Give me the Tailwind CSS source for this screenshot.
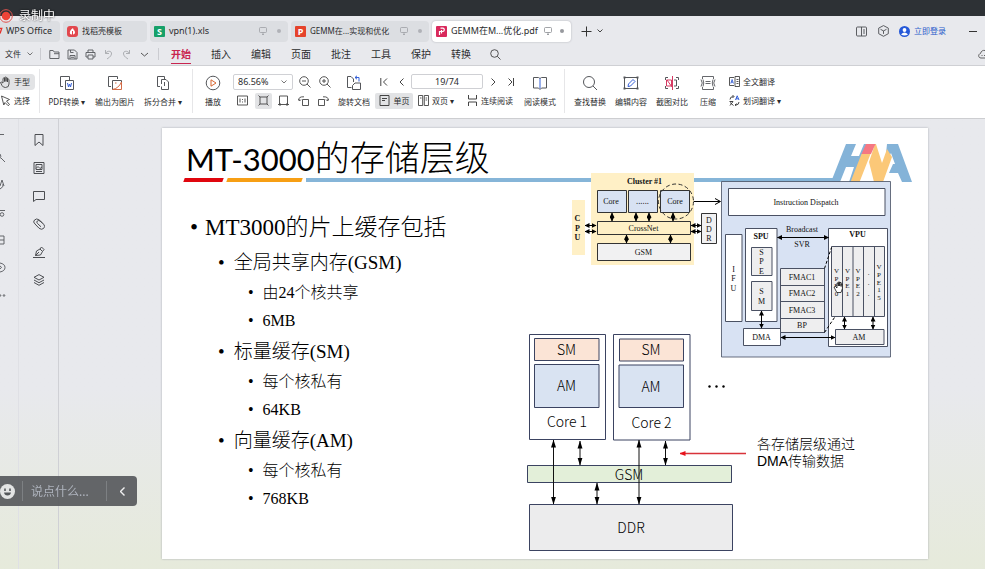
<!DOCTYPE html>
<html lang="zh-CN">
<head>
<meta charset="utf-8">
<title>GEMM在M...优化.pdf - WPS Office</title>
<script src="https://cdn.jsdelivr.net/npm/@tailwindcss/browser@4"></script>
</head>
<body class="flex flex-col h-screen overflow-hidden font-['Noto_Sans','Noto_Sans_CJK_SC',sans-serif] text-[8px] leading-3 text-[#2b2c2e] bg-[#e8e9ed]">

<!-- Recording bar -->
<div class="h-4 shrink-0 bg-[#2d3135]"></div>
<div class="fixed z-10 left-0 top-2 flex items-center gap-[6px] text-white text-[12px] leading-4 [text-shadow:0_0_2px_#000]">
  <svg class="w-[13px] h-4" viewBox="0 0 13 16"><circle cx="6" cy="8" r="6.3" fill="none" stroke="#e2534d"/><circle cx="6" cy="8" r="4.3" fill="#ee4438"/></svg>
  <span>录制中</span>
</div>

<!-- Document tabs -->
<div class="flex items-center h-[27px] shrink-0 pt-[3px]">
  <button class="flex items-center h-[21px] w-[60px] bg-[#dcdee2] rounded-r text-[9px] whitespace-nowrap"><svg class="w-[6px] h-2 shrink-0" viewBox="0 0 7 8"><path d="M0 1h2L0 7" fill="none" stroke="#e5302a" stroke-width="1.6"/></svg>WPS Office</button>
  <button class="flex items-center h-[21px] w-[84px] ml-[3px] pl-1 gap-1 bg-[#dcdee2] rounded"><svg class="w-[11px] h-[11px]" viewBox="0 0 11 11"><rect width="11" height="11" rx="3" fill="#e2474d"/><path d="M6 2c-3 2-3.500 4-3 5.500S8 9 8 6.500 6 4 6 2z" fill="#fff"/><path d="M5.500 5v4" stroke="#e2474d"/></svg>找稻壳模板</button>
  <button class="flex items-center h-[21px] w-[138px] ml-[3px] px-1 gap-1 bg-[#dcdee2] rounded text-[9px]"><svg class="w-[11px] h-[11px]" viewBox="0 0 11 11"><rect width="11" height="11" rx="1" fill="#16a069"/><text x="5.500" y="9" font-size="9" font-weight="700" text-anchor="middle" fill="#fff">S</text></svg><span class="flex-1 text-left">vpn(1).xls</span><svg class="w-2 h-2 mr-[6px]" viewBox="0 0 8 8" fill="none" stroke="#9da0a5" stroke-width=".8"><rect x=".5" y=".5" width="7" height="5" rx="1"/><path d="M3 7.500h2M4 5.500v2"/></svg><span class="w-1 h-1 rounded-full bg-[#b0b2b7] mr-[3px]"></span></button>
  <button class="flex items-center h-[21px] w-[138px] ml-[3px] px-1 gap-1 bg-[#dcdee2] rounded"><svg class="w-[11px] h-[11px]" viewBox="0 0 11 11"><rect width="11" height="11" rx="1" fill="#e5432b"/><text x="5.500" y="9" font-size="9" font-weight="700" text-anchor="middle" fill="#fff">P</text></svg><span class="flex-1 text-left whitespace-nowrap">GEMM在...实现和优化</span><svg class="w-2 h-2 mr-[6px]" viewBox="0 0 8 8" fill="none" stroke="#9da0a5" stroke-width=".8"><rect x=".5" y=".5" width="7" height="5" rx="1"/><path d="M3 7.500h2M4 5.500v2"/></svg><span class="w-1 h-1 rounded-full bg-[#b0b2b7] mr-[3px]"></span></button>
  <button class="flex items-center h-[21px] w-[139px] ml-[3px] px-1 gap-1 bg-white rounded shadow-[0_0_2px_#a9abb2]"><svg class="w-[11px] h-[11px] shrink-0" viewBox="0 0 11 11"><rect width="11" height="11" rx="1" fill="#d9295c"/><path d="M3.500 9V5.500H7A1.700 1.700 0 0 0 7 2.200H4.500M5.500 7.500V4" fill="none" stroke="#fff" stroke-width="1.200"/></svg><span class="flex-1 text-left whitespace-nowrap text-[9px]">GEMM在M...优化.pdf</span><svg class="w-2 h-2 mr-1 shrink-0" viewBox="0 0 8 8" fill="none" stroke="#8a8d92" stroke-width=".8"><rect x=".5" y=".5" width="7" height="5" rx="1"/><path d="M3 7.500h2M4 5.500v2"/></svg><span class="w-1 h-1 rounded-full bg-[#97999e] mr-[3px]"></span></button>
  <button aria-label="新建" class="ml-[10px]"><svg class="w-[11px] h-[11px]" viewBox="0 0 11 11"><path d="M5.500 .5v10M.5 5.500h10" stroke="#333"/></svg></button>
  <button aria-label="标签列表" class="ml-[5px]"><svg class="w-[6px] h-1" viewBox="0 0 6 4"><path d="M.5.500L3 3 5.500.500" fill="none" stroke="#444"/></svg></button>
  <span class="flex-1"></span>
  <button aria-label="分栏"><svg class="w-[11px] h-[11px]" viewBox="0 0 11 11" fill="none" stroke="#4c4e52" stroke-width=".9"><rect x=".5" y="1" width="10" height="9" rx="1"/><path d="M5.500 1v9M8 3v5"/></svg></button>
  <button aria-label="应用" class="ml-[11px]"><svg class="w-[11px] h-3" viewBox="0 0 11 12" fill="none" stroke="#4c4e52" stroke-width=".9"><path d="M5.500.600l4.800 2.500v5.600L5.500 11.300.700 8.700V3.100zM2.500 4.300l3 1.600 3-1.600M5.500 5.900v3"/></svg></button>
  <button class="flex items-center gap-1 ml-[10px] text-[#2a5bcb] whitespace-nowrap"><svg class="w-[11px] h-[11px]" viewBox="0 0 11 11"><circle cx="5.500" cy="5.500" r="5.500" fill="#2659d8"/><circle cx="5.500" cy="4" r="1.900" fill="#fff"/><path d="M2 8.500q3.500-4 7 0-3.500 2-7 0z" fill="#fff"/></svg>立即登录</button>
  <button aria-label="最小化" class="ml-[23px] mr-2 w-2 h-px bg-[#333]"></button>
</div>

<!-- Menu row -->
<nav class="flex items-center h-[23px] shrink-0 border-b border-[#cfd0d4] text-[10px] [&>svg]:shrink-0">
  <button class="flex items-center ml-[5px] gap-[6px] text-[8px] whitespace-nowrap">文件<svg class="w-[6px] h-1" viewBox="0 0 6 4"><path d="M.5.500L3 3 5.500.500" fill="none" stroke="#555" stroke-width=".8"/></svg></button>
  <span class="w-px h-3 bg-[#cbccd1] ml-[7px] mr-2"></span>
  <div class="flex gap-[7px] [&_svg]:w-[11px] [&_svg]:h-[11px]">
    <button aria-label="打开"><svg viewBox="0 0 11 11" fill="none" stroke="#55575b" stroke-width=".9"><path d="M.8 9.500V1.500h3.400l1 1.500h4.800v6.500zM5 4.700h5"/></svg></button>
    <button aria-label="保存"><svg viewBox="0 0 11 11" fill="none" stroke="#55575b" stroke-width=".9"><path d="M1 10V1h6.500L10 3.500V10zM3 10V6.500h5V10M3.500 1v2.500h3M4 8.300h3"/></svg></button>
    <button aria-label="打印"><svg viewBox="0 0 11 11" fill="none" stroke="#55575b" stroke-width=".9"><path d="M3 3.500V1h5v2.500M3 8H1V3.500h9V8H8M3 6h5v4H3z"/></svg></button>
    <button aria-label="撤销"><svg viewBox="0 0 11 11" fill="none" stroke="#a6a8ad" stroke-width=".9"><path d="M2.500 1v3.500H6M2.500 4.300C5 1 9 2 8.500 5S5 9 4 10"/></svg></button>
    <button aria-label="重做"><svg viewBox="0 0 11 11" fill="none" stroke="#a6a8ad" stroke-width=".9"><path d="M8.500 1v3.500H5M8.500 4.300C6 1 2 2 2.500 5S6 9 7 10"/></svg></button>
    <button aria-label="更多"><svg viewBox="0 0 11 11" fill="none" stroke="#444" stroke-width=".9"><path d="M2 4l3.500 3L9 4"/></svg></button>
  </div>
  <span class="w-px h-3 bg-[#cbccd1] ml-2 mr-[2px]"></span>
  <a href="#" class="w-10 h-[20px] flex flex-col items-center justify-end font-bold text-[#c8254f]"><span class="border-b border-[#c8254f] pb-[3px]">开始</span></a>
  <a href="#" class="w-10 text-center">插入</a>
  <a href="#" class="w-10 text-center">编辑</a>
  <a href="#" class="w-10 text-center">页面</a>
  <a href="#" class="w-10 text-center">批注</a>
  <a href="#" class="w-10 text-center">工具</a>
  <a href="#" class="w-10 text-center">保护</a>
  <a href="#" class="w-10 text-center">转换</a>
  <button aria-label="搜索" class="ml-[9px]"><svg class="w-[11px] h-[11px]" viewBox="0 0 11 11" fill="none" stroke="#444" stroke-width=".9"><circle cx="4.500" cy="4.500" r="3.800"/><path d="M7.300 7.300l3.200 3.200"/></svg></button>
  <svg class="w-[7px] h-[10px] ml-auto" viewBox="0 0 7 10" fill="none" stroke="#555" stroke-width=".9"><path d="M7 9H3C0 9 0 5 2.500 4.500 3 2 5 1 7 1.500M3.500 6.500h1M6 6.500h1"/></svg>
</nav>

<!-- Ribbon -->
<div class="flex items-center h-[53px] pb-[2px] shrink-0 bg-white border-b border-[#cdced1] whitespace-nowrap [&_svg]:shrink-0">
  <div class="flex flex-col gap-[3px] w-[35px]">
    <button class="flex items-center gap-[3px] h-4 bg-[#e2e3e5] rounded-r"><svg class="w-[11px] h-3" viewBox="0 0 11 12" fill="none" stroke="#444" stroke-width=".9"><path d="M3 7V2.500q.8-1 1.500 0V5.500 1.500q.8-1 1.500 0v4-3.500q.8-1 1.500 0v4V3.500q.9-.9 1.500 0V8q0 3.500-3.500 3.500-2.500 0-3.500-2L.5 6.500q1-1 2.500.5"/></svg>手型</button>
    <button class="flex items-center gap-[3px] h-4"><svg class="w-[11px] h-3" viewBox="0 0 11 12" fill="none" stroke="#444" stroke-width=".9"><path d="M1.500 1l8 3.500L6.500 6l3 3.500-1.300 1.200L5 7.500 3.800 10z"/></svg>选择</button>
  </div>
  <span class="w-px h-11 bg-[#e6e6e8] ml-1 mr-[3px]"></span>
  <button class="flex flex-col items-center gap-[5px] w-12"><svg class="w-4 h-4" viewBox="0 0 16 16" fill="none" stroke="#55575b"><path d="M4 11.500H1.500v-10h9V5M6.500 5.500h8v9h-8z"/><path d="M8.500 8l1 4 1-3 1 3 1-4" stroke="#3560d8"/></svg><span>PDF转换 ▾</span></button>
  <button class="flex flex-col items-center gap-[5px] w-12"><svg class="w-4 h-4" viewBox="0 0 16 16" fill="none" stroke="#55575b"><path d="M4 11.500H1.500v-10h9V4M5.500 5.500h9v4M5.500 5.500v9h4"/><path d="M5.500 14.500q6-1 9-7.500v7.500zM8 8h1.500" stroke="#d36a45"/></svg><span>输出为图片</span></button>
  <button class="flex flex-col items-center gap-[5px] w-12"><svg class="w-4 h-4" viewBox="0 0 16 16" fill="none" stroke="#55575b"><path d="M5 11.500H2.500v-10h7V4M6.500 4.500H11L13.500 7v7.500h-7v-3M6.500 9V4.500M9.500 7v4"/></svg><span>拆分合并 ▾</span></button>
  <span class="w-px h-11 bg-[#e6e6e8] ml-[5px] mr-1"></span>
  <button class="flex flex-col items-center gap-[5px] w-8"><svg class="w-4 h-4" viewBox="0 0 16 16" fill="none" stroke="#55575b"><circle cx="8" cy="8" r="6.800"/><path d="M6 4.800v6.400L11 8z" stroke="#d9662f"/></svg><span>播放</span></button>

  <div class="flex flex-col gap-[3px] ml-1 w-[98px]">
    <div class="flex items-center h-4">
      <select aria-label="缩放比例" class="appearance-none w-[60px] h-4 border border-[#d0d1d5] rounded-xs pl-1 text-[9px] leading-3 bg-white"><option>86.56%</option></select>
      <svg class="w-[6px] h-1 -ml-3 pointer-events-none" viewBox="0 0 6 4"><path d="M.5.500L3 3 5.500.500" fill="none" stroke="#555" stroke-width=".8"/></svg>
      <button aria-label="缩小" class="ml-3"><svg class="w-3 h-3" viewBox="0 0 12 12" fill="none" stroke="#444" stroke-width=".9"><circle cx="5" cy="5" r="4.300"/><path d="M8 8l3.500 3.500M3 5h4"/></svg></button>
      <button aria-label="放大" class="ml-2"><svg class="w-3 h-3" viewBox="0 0 12 12" fill="none" stroke="#444" stroke-width=".9"><circle cx="5" cy="5" r="4.300"/><path d="M8 8l3.500 3.500M3 5h4M5 3v4"/></svg></button>
    </div>
    <div class="flex items-center gap-1 pl-[2px] h-4">
      <button aria-label="实际大小" class="w-4 h-4 grid place-items-center"><svg class="w-[11px] h-[11px]" viewBox="0 0 11 11" fill="none" stroke="#444" stroke-width=".9"><path d="M.5 1h10v9H.5zM3 3.500v4M8 3.500v4M5.500 4v1M5.500 6.500v1"/></svg></button>
      <button aria-label="适合页面" class="w-[17px] h-4 grid place-items-center bg-[#e2e3e5] rounded-xs"><svg class="w-[11px] h-[11px]" viewBox="0 0 11 11" fill="none" stroke="#444" stroke-width=".9"><path d="M2 2h7v7H2zM.5.500L2 2M10.500.500L9 2M.5 10.500L2 9M10.500 10.500L9 9"/></svg></button>
      <button aria-label="适合宽度" class="w-4 h-4 grid place-items-center"><svg class="w-[11px] h-[11px]" viewBox="0 0 11 11" fill="none" stroke="#444" stroke-width=".9"><path d="M1.500 1h8v8M1.500 1v8M0 9.500h11M2 8v3M9 8v3"/></svg></button>
      <button aria-label="向左旋转" class="w-4 h-4 grid place-items-center"><svg class="w-[11px] h-[11px]" viewBox="0 0 11 11" fill="none" stroke="#444" stroke-width=".9"><path d="M4.500 4.500h6v6h-6zM1 5.500Q0 1.500 6 1.800M.5 4l1 2 1.500-1.500"/></svg></button>
      <button aria-label="向右旋转" class="w-4 h-4 grid place-items-center"><svg class="w-[11px] h-[11px]" viewBox="0 0 11 11" fill="none" stroke="#444" stroke-width=".9"><path d="M.5 4.500h6v6h-6zM10 5.500Q11 1.500 5 1.800M10.500 4l-1 2L8 4.500"/></svg></button>
    </div>
  </div>
  <button class="flex flex-col items-center gap-[5px] ml-[3px] w-10"><svg class="w-4 h-4" viewBox="0 0 16 16" fill="none" stroke="#55575b"><path d="M5.500 12.500h-4v-11H5L7.500 4v3M6.500 14.500v-4L9 8h5.500v6.500z"/><path d="M9 2.500h4v4M11 .8L9 2.500 11 4.200" stroke="#3560d8"/></svg><span>旋转文档</span></button>

  <div class="flex flex-col gap-[3px] ml-[2px] w-[140px]">
    <div class="flex items-center h-4 pl-1">
      <button aria-label="首页"><svg class="w-2 h-2" viewBox="0 0 8 8" fill="none" stroke="#444"><path d="M.8 0v8M7 .5L3.500 4 7 7.500"/></svg></button>
      <button aria-label="上一页" class="ml-[11px]"><svg class="w-[5px] h-2" viewBox="0 0 5 8" fill="none" stroke="#444"><path d="M4.500.500L1 4l3.500 3.500"/></svg></button>
      <input aria-label="页码" value="19/74" class="w-[72px] h-[15px] ml-[7px] border border-[#cfd0d4] rounded-xs text-center text-[9px] bg-white">
      <button aria-label="下一页" class="ml-2"><svg class="w-[5px] h-2" viewBox="0 0 5 8" fill="none" stroke="#444"><path d="M.5.500L4 4 .5 7.500"/></svg></button>
      <button aria-label="末页" class="ml-3"><svg class="w-[6px] h-2" viewBox="0 0 6 8" fill="none" stroke="#444"><path d="M.5.500L4 4 .5 7.500M5.500 0v8"/></svg></button>
    </div>
    <div class="flex items-center h-4">
      <button class="flex items-center justify-center gap-1 w-[38px] h-4 -ml-px bg-[#e2e3e5] rounded-xs"><svg class="w-[11px] h-[11px]" viewBox="0 0 11 11" fill="none" stroke="#444"><path d="M1 .5h9v10H1zM3 3.500h5M3 5.500h3"/></svg>单页</button>
      <button class="flex items-center gap-[3px] ml-[5px]"><svg class="w-[11px] h-[11px]" viewBox="0 0 11 11" fill="none" stroke="#444" stroke-width=".9"><path d="M.5.500h4.200v10H.5zM6.300.500h4.200v10H6.300zM2 3h1.500M7.600 3h1.500M7.600 5h1.500"/></svg>双页 ▾</button>
      <button class="flex items-center gap-[3px] ml-auto mr-[3px]"><svg class="w-[11px] h-[11px]" viewBox="0 0 11 11" fill="none" stroke="#444"><path d="M1.500 0v4h8V0M1.500 11V7h8v4"/></svg>连续阅读</button>
    </div>
  </div>
  <button class="flex flex-col items-center gap-[5px] ml-[2px] w-11"><svg class="w-4 h-4" viewBox="0 0 16 16" fill="none" stroke="#55575b"><path d="M1.500 2.500h5L8 3.500l1.500-1h5v10.500h-5L8 14.500 6.500 13h-5z"/><path d="M8 3.500v10" stroke="#3560d8"/></svg><span>阅读模式</span></button>
  <span class="w-px h-11 bg-[#e6e6e8] ml-[2px] mr-[5px]"></span>
  <button class="flex flex-col items-center gap-[5px] w-10"><svg class="w-4 h-4" viewBox="0 0 16 16" fill="none" stroke="#55575b"><circle cx="7" cy="7" r="5.500"/><path d="M11 11l4 4"/></svg><span>查找替换</span></button>
  <button class="flex flex-col items-center gap-[5px] w-[42px]"><svg class="w-4 h-4" viewBox="0 0 16 16" fill="none" stroke="#55575b"><path d="M1.500 2.500h13v11h-13z"/><path d="M.5 2.500h2M13.500 2.500h2M.5 13.500h2M13.500 13.500h2" stroke-width="2"/><path d="M5 11.500l.5-2.500L10 4.500l2 2L7.500 11z" stroke="#3560d8"/></svg><span>编辑内容</span></button>
  <button class="flex flex-col items-center gap-[5px] w-10"><svg class="w-4 h-4" viewBox="0 0 16 16" fill="none" stroke="#55575b"><path d="M4 2.500H1.500V5M1.500 11v2.500H4M12 2.500h2.500V5M14.500 11v2.500H12M10 5h2.500v6H10"/><path d="M8.500 1v14M2.500 5h5v6h-5zM3 5l5 7" stroke="#d63a62"/></svg><span>截图对比</span></button>
  <button class="flex flex-col items-center gap-[5px] w-8"><svg class="w-4 h-4" viewBox="0 0 16 16" fill="none" stroke="#55575b"><path d="M2.500 4V1.500h11V4M2.500 12v2.500h11V12M5.500 6.500h5M5.500 8.500h5M1 4.500q2.500 3.500 0 7M3 4.500q1.500 3.500 0 7M15 4.500q-2.500 3.500 0 7M13 4.500q-1.500 3.500 0 7" stroke-width=".9"/></svg><span>压缩</span></button>
  <div class="flex flex-col gap-[3px] ml-[5px]">
    <button class="flex items-center gap-[3px] h-4"><svg class="w-[11px] h-[11px]" viewBox="0 0 11 11" fill="none" stroke="#444" stroke-width=".9"><path d="M5 1.500H.5v8H5M6 .5h4.500v10H6zM7.500 3.500h2M7.500 5.500h2M7.500 7.500h2"/><path d="M1.800 7.500l1.300-4 1.300 4M2.300 6.200h1.600" stroke="#3560d8"/></svg>全文翻译</button>
    <button class="flex items-center gap-[3px] h-4"><svg class="w-[11px] h-[11px]" viewBox="0 0 11 11" fill="none" stroke="#444"><path d="M1 4.500Q1 1.500 4.500 1.500M3.500 0l1.500 1.500L3.500 3M10 7q0 3-3.500 3M7.500 8.500L6 10l1.500 1M.5 6.500h3.500L1 10.500M1 7.500l3.500 3"/><path d="M6.500 5L8.200.800 10 5M7 3.800h2.500" stroke="#3560d8"/></svg>划词翻译 ▾</button>
  </div>
</div>

<!-- Workspace -->
<main class="flex flex-1 min-h-0 bg-linear-to-b from-[#e8e9ed] from-60% to-[#e6eadb]">
  <div class="w-[19px] shrink-0 border-r border-[#dfe0e5] pt-[9px]">
    <svg class="w-[6px] h-[174px]" viewBox="0 128 6 174" fill="none" stroke="#55575b" stroke-width=".9"><path d="M0 134.500h4M0 154q2 2-.5 5M1 158l4 4M0 189q4-2 3-5M0 186l2-6 2 6M0 210.500h5M0 236h4v4h-4M4 240v4h-4M0 263q5 1 5 4.500T0 272M0 266q3 1 0 3"/><circle cx="2" cy="214.500" r="1.800"/><circle cx="0" cy="295.500" r=".8"/><circle cx="4" cy="295.500" r=".8"/></svg>
  </div>
  <aside class="flex flex-col items-center gap-4 w-10 shrink-0 border-r border-[#cfd0d5] pt-[15px] [&_svg]:w-3 [&_svg]:h-3 [&_button]:h-3">
    <button aria-label="书签"><svg viewBox="0 0 12 12" fill="none" stroke="#4c4e52"><path d="M2 .5h8v11L6 8l-4 3.500z"/></svg></button>
    <button aria-label="缩略图"><svg viewBox="0 0 12 12" fill="none" stroke="#4c4e52"><path d="M1 .5h10v11H1zM3 2.500h6v5H3zM3 6.500l2-2 2 2 2-1.500M3 9.500h6"/></svg></button>
    <button aria-label="批注"><svg viewBox="0 0 12 12" fill="none" stroke="#4c4e52"><path d="M.5 1.500h11v8H3l-2.500 2z"/></svg></button>
    <button aria-label="附件"><svg viewBox="0 0 12 12" fill="none" stroke="#4c4e52"><path d="M9.500 5L6 1.800Q3.500 0 1.500 2T2 6l4 4.200q2.500 2 4.500.300t.5-4L7 3Q5.500 2 4.300 3T4.500 5.500L8 8.800"/></svg></button>
    <button aria-label="签名"><svg viewBox="0 0 12 12" fill="none" stroke="#4c4e52"><path d="M0 11.500h12M2.500 9.500L3.500 5 7 3l2.500 2.500L7.500 9zM7 3l1.500-2L11 3.500l-1.500 2M2.500 9.500L6 6"/></svg></button>
    <button aria-label="图层"><svg viewBox="0 0 12 12" fill="none" stroke="#4c4e52"><path d="M6 .6l5 2.700-5 2.700-5-2.700zM1 6l5 2.700L11 6M1 8.500l5 2.800 5-2.800"/></svg></button>
  </aside>

  <article class="flex flex-1 self-start ml-[103px] mr-[57px] mt-[9px] bg-white text-black shadow-[0_0_2px_#a9abb0]">
    <div class="flex-1 min-w-0">
      <h1 class="mt-2 pl-6 h-[42px] text-[35px] leading-[42px] font-light font-['Lato','Noto_Sans_CJK_SC',sans-serif] whitespace-nowrap"><span class="font-normal text-[31px]">MT-3000</span>的存储层级</h1>
      <div class="flex gap-1 h-[4px] pl-[22px]">
        <span class="w-[39px] bg-[#e0060e] -skew-x-[20deg]"></span>
        <span class="w-[75px] bg-[#f79f14] -skew-x-[20deg]"></span>
        <span class="flex-1 bg-[#86b5d8]"></span>
      </div>
      <ul class="pt-[28px] font-light font-['Liberation_Serif','Noto_Sans_CJK_SC',serif] whitespace-nowrap">
        <li class="flex gap-[7px] pl-7 text-[23px] leading-9"><span>•</span>MT3000的片上缓存包括</li>
        <li class="flex gap-[9px] pl-[56px] text-[19px] leading-[33px]"><span>•</span>全局共享内存(GSM)</li>
        <li class="flex gap-[9px] pl-[86px] text-[16px] leading-7"><span>•</span>由24个核共享</li>
        <li class="flex gap-[9px] pl-[86px] text-[16px] leading-7"><span>•</span>6MB</li>
        <li class="flex gap-[9px] pl-[56px] text-[19px] leading-[33px]"><span>•</span>标量缓存(SM)</li>
        <li class="flex gap-[9px] pl-[86px] text-[16px] leading-7"><span>•</span>每个核私有</li>
        <li class="flex gap-[9px] pl-[86px] text-[16px] leading-7"><span>•</span>64KB</li>
        <li class="flex gap-[9px] pl-[56px] text-[19px] leading-[33px]"><span>•</span>向量缓存(AM)</li>
        <li class="flex gap-[9px] pl-[86px] text-[16px] leading-7"><span>•</span>每个核私有</li>
        <li class="flex gap-[9px] pl-[86px] text-[16px] leading-7"><span>•</span>768KB</li>
      </ul>
    </div>

    <svg class="w-[408px] h-[431px] shrink-0" viewBox="520 128 408 431" role="img" aria-label="存储层级结构图">
      <defs>
        <marker id="a" markerUnits="userSpaceOnUse" markerWidth="5" markerHeight="5" viewBox="0 0 5 5" refX="4.500" refY="2.500" orient="auto-start-reverse"><path d="M0 0l5 2.500L0 5z"/></marker>
        <marker id="b" markerUnits="userSpaceOnUse" markerWidth="8" markerHeight="6" viewBox="0 0 8 6" refX="7.500" refY="3" orient="auto-start-reverse"><path d="M0 .5l8 2.500-8 2.500z"/></marker>
        <marker id="r" markerUnits="userSpaceOnUse" markerWidth="6" markerHeight="6" viewBox="0 0 6 6" refX="5.500" refY="3" orient="auto"><path d="M0 .5l6 2.500-6 2.500z" fill="#e8121b"/></marker>
      </defs>
      <!-- rule and logo -->
      <path d="M520 178h316v4H520z" fill="#86b5d8"/>
      <g>
        <path d="M846 144h10l-5 12h8l5-12h9l-4 10-14 28h-6l5-15h-8l-6 15h-9z" fill="#84b3d8"/>
        <path d="M887 144h11l14 38h-10l-4-9h-9l4-9h2l-4-11-6 11z" fill="#84b3d8"/>
        <path d="M861.500 154h9l-11 28h-9zM876 144l6 19 5-14 5 8-9 25h-9l-5-20 6-18z" fill="#fbc878"/>
        <path d="M866 144h9.500l-4.500 10h-9.500z" fill="#f57782"/>
      </g>
      <!-- cluster -->
      <path d="M591 173h103v92H591zM572 200h13v55H572z" fill="#fff0c6"/>
      <g stroke="#333" fill="#d8e2f3">
        <path d="M597.500 190.500h29v22h-29zM628.500 190.500h29v22h-29zM660.500 190.500h29v22h-29z"/>
        <path d="M597.500 221.500h93v13h-93z" fill="#fff0c6"/>
        <path d="M597.500 243.500h93v17h-93zM701.500 213.500h15v30h-15z" fill="#f1f1f2"/>
        <circle cx="676" cy="201.500" r="17.500" fill="none" stroke-dasharray="4 2.500"/>
      </g>
      <g stroke="#000" stroke-width="1" fill="none">
        <path d="M694 201.500h26M715 198.500l5.500 3-5.500 3"/>
        <g marker-start="url(#a)" marker-end="url(#a)">
          <path d="M612 213v8"/><path d="M636 213v8"/><path d="M649 213v8"/><path d="M673 213v8"/>
          <path d="M626.500 235v8"/><path d="M670.500 235v8"/>
          <path d="M585 225.500h11"/><path d="M585 231.500h11"/><path d="M691 225.500h10"/><path d="M691 231.500h10"/>
        </g>
      </g>
      <!-- core detail -->
      <path d="M721.500 181.500h169V357h-169z" fill="#d8e2f3" stroke="#444c60" stroke-width=".8"/>
      <g stroke="#4a5163" fill="#fff">
        <path d="M728.500 188.500h156.500v27H728.500zM725.500 234.500H742v87h-16.500zM745.500 228.500H777v93h-31.500zM743.500 328.500h37v17h-37zM828.500 228.500h59v118h-59z"/>
        <path d="M751.500 247.500H772v28h-20.500zM751.500 281.500H772v29h-20.500zM780.500 268.500h44v64h-44zM780.500 285.500h44M780.500 301.500h44M780.500 318.500h44M831.500 246.500h53v70h-53zM842.500 246.500v70M853 246.500v70M863.500 246.500v70M874.500 246.500v70M835.500 329.500h48.500v15h-48.500z" fill="#eeeeef"/>
      </g>
      <g stroke="#000" fill="none">
        <path d="M824.500 268.500l7-21M824.500 332.500l10-15" stroke-dasharray="3 2"/>
        <g marker-start="url(#a)" marker-end="url(#a)"><path d="M777.500 237.500h51"/><path d="M761.500 311v17"/><path d="M781 337.500h54"/><path d="M844.500 317v12"/><path d="M873 317v12"/></g>
      </g>
      <g font-family="Liberation Serif, serif" font-size="8" text-anchor="middle" fill="#111">
        <g font-weight="700"><text x="644.500" y="184">Cluster #1</text><text x="761" y="239">SPU</text><text x="857.500" y="237">VPU</text>
        <text><tspan x="577.500" y="221">C</tspan><tspan x="577.500" y="231">P</tspan><tspan x="577.500" y="240">U</tspan></text></g>
        <text x="611" y="204">Core</text><text x="642.500" y="204" font-family="Noto Sans, sans-serif">......</text><text x="675" y="204">Core</text><text x="643.500" y="231">CrossNet</text><text x="643.500" y="255">GSM</text>
        <text><tspan x="709" y="222.500">D</tspan><tspan x="709" y="231.500">D</tspan><tspan x="709" y="240.500">R</tspan></text>
        <text x="806" y="205">Instruction Dispatch</text><text x="802" y="232">Broadcast</text><text x="802" y="247">SVR</text>
        <text><tspan x="733.500" y="271.500">I</tspan><tspan x="733.500" y="281">F</tspan><tspan x="733.500" y="291">U</tspan></text>
        <text><tspan x="761.500" y="255">S</tspan><tspan x="761.500" y="264">P</tspan><tspan x="761.500" y="273.500">E</tspan></text>
        <text><tspan x="761.500" y="294">S</tspan><tspan x="761.500" y="304">M</tspan></text>
        <text x="802" y="280">FMAC1</text><text x="802" y="296">FMAC2</text><text x="802" y="313">FMAC3</text><text x="802" y="328">BP</text><text x="761.500" y="340">DMA</text><text x="859" y="340">AM</text>
        <g font-size="7">
        <text><tspan x="836.500" y="273">V</tspan><tspan x="836.500" y="281">P</tspan><tspan x="836.500" y="288">E</tspan><tspan x="836.500" y="296">0</tspan></text>
        <text><tspan x="847.500" y="273">V</tspan><tspan x="847.500" y="281">P</tspan><tspan x="847.500" y="288">E</tspan><tspan x="847.500" y="296">1</tspan></text>
        <text><tspan x="858" y="273">V</tspan><tspan x="858" y="281">P</tspan><tspan x="858" y="288">E</tspan><tspan x="858" y="296">2</tspan></text>
        <text><tspan x="868.500" y="275">.</tspan><tspan x="868.500" y="285">.</tspan><tspan x="868.500" y="296">.</tspan></text>
        <text><tspan x="879" y="269">V</tspan><tspan x="879" y="277">P</tspan><tspan x="879" y="285">E</tspan><tspan x="879" y="292">1</tspan><tspan x="879" y="299.500">5</tspan></text>
        </g>
      </g>
      <path d="M836 291l-2-4 1.500-.5 1.500 1.500v-5h1.300v3-4h1.400v4-3.500h1.400v4-2.500h1.300v4.500l-1.400 4h-4z" fill="#fff" stroke="#000" stroke-width=".7"/>
      <!-- hierarchy -->
      <g stroke="#3b4361" fill="#fff">
        <path d="M529.500 334.500h76v105h-76zM613.500 334.500H690v105.500h-76.500z"/>
        <path d="M534.500 338.500h64.500v22h-64.500zM619.500 339h64v22h-64z" fill="#fbe4d6"/>
        <path d="M534.500 364.500h64.500v43h-64.500zM619 365h64.500v42.500H619z" fill="#d9e3f2"/>
        <path d="M527.500 465.500h204v17h-204z" fill="#e3efd9"/>
        <path d="M529.500 504.500h203v46h-203z" fill="#ececed"/>
      </g>
      <g font-family="Noto Sans CJK SC, sans-serif" font-size="14" font-weight="300" text-anchor="middle" fill="#000">
        <text x="566.500" y="355">SM</text><text x="651" y="355">SM</text><text x="566.500" y="391">AM</text><text x="651" y="392">AM</text><text x="567" y="427">Core 1</text><text x="651.500" y="428">Core 2</text>
        <text x="629" y="480">GSM</text><text x="631" y="533">DDR</text>
      </g>
      <g font-family="Liberation Sans, Noto Sans CJK SC, sans-serif" font-size="14" font-weight="300" fill="#000"><text x="757" y="449">各存储层级通过</text><text x="757" y="466">DMA传输数据</text></g>
      <g><circle cx="709.500" cy="386.500" r="1.200"/><circle cx="716.500" cy="386.500" r="1.200"/><circle cx="723.500" cy="386.500" r="1.200"/></g>
      <g stroke="#111" fill="none" marker-start="url(#b)" marker-end="url(#b)">
        <path d="M553.500 440v64"/><path d="M580 441v24"/><path d="M639 440v64"/><path d="M665.500 441v24"/><path d="M597 483v21"/>
      </g>
      <path d="M746 453.500h-66" stroke="#d8333a" stroke-width="1.300" marker-end="url(#r)"/>
    </svg>
  </article>
</main>

<!-- Floating chat box -->
<div class="fixed left-0 bottom-[63px] flex items-center w-[137px] h-[30px] bg-[#54575a]/90 rounded-r">
  <button aria-label="表情"><svg class="w-[15px] h-[15px]" viewBox="0 0 15 15"><circle cx="7.500" cy="7.500" r="7.500" fill="#e3e4e4"/><path d="M5 4.500v2.500M10 4.500v2.500" stroke="#54575a" stroke-width="1.600"/><path d="M4 8.500h7q-.5 3-3.500 3T4 8.500z" fill="#54575a"/></svg></button>
  <input aria-label="聊天消息" placeholder="说点什么..." class="flex-1 min-w-0 ml-[7px] mr-0 h-5 border-x border-[#7d8083] pl-2 text-[12px] placeholder:text-[#aeb3bd] text-white">
  <button aria-label="收起" class="w-[30px] grid place-items-center"><svg class="w-[5px] h-[9px]" viewBox="0 0 5 9" fill="none" stroke="#f0f0f0" stroke-width="1.400"><path d="M4.500.500l-4 4 4 4"/></svg></button>
</div>
</body>
</html>
